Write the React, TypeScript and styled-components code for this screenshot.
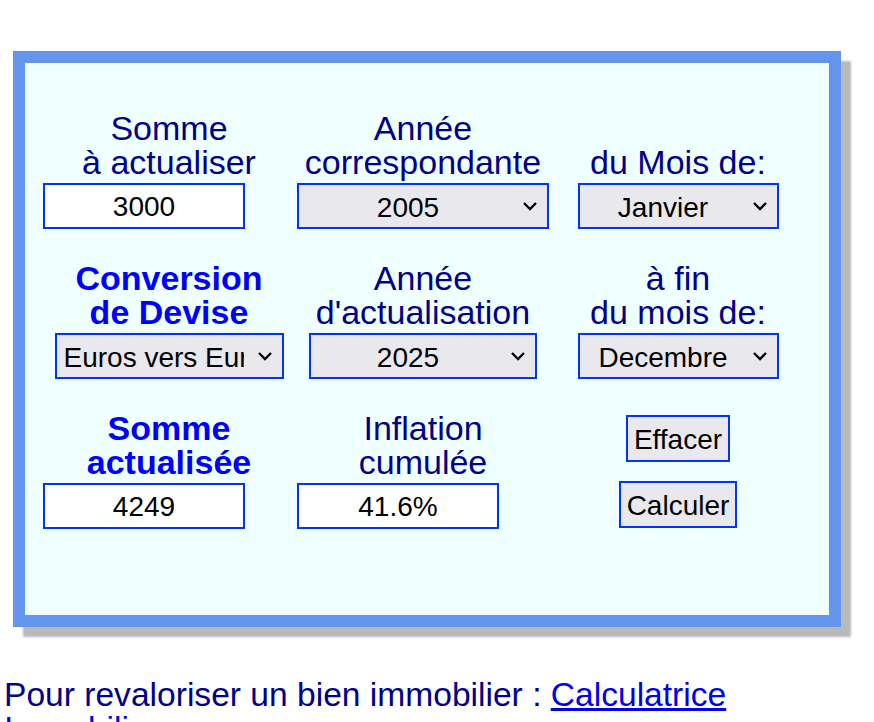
import React from 'react';
import styled, { createGlobalStyle } from 'styled-components';

const GlobalStyle = createGlobalStyle`
  body {
    margin: 0;
    background: #fff;
    font-family: "Liberation Sans", Arial, Helvetica, sans-serif;
  }
`;

const Page = styled.div`
  padding-top: 51px;
`;

const Frame = styled.form`
  margin-left: 13px;
  width: 762px;
  border: 12px solid #6495ed;
  background: #f0ffff;
  box-shadow: 10px 10px 2px #b9b9b9;
  padding: 49px 24px 86px 18px;
`;

const Grid = styled.div`
  display: grid;
  grid-template-columns: 252px 252px 254px;
  column-gap: 2px;
  row-gap: 33px;
`;

const Cell = styled.div<{ $align?: string }>`
  display: flex;
  flex-direction: column;
  align-items: ${(p) => p.$align || 'center'};
`;

const Label = styled.div<{ $bold?: boolean }>`
  align-self: stretch;
  height: 68px;
  margin-bottom: 3px;
  display: flex;
  flex-direction: column;
  justify-content: flex-end;
  text-align: center;
  font-size: 34px;
  line-height: 34px;
  white-space: nowrap;
  color: ${(p) => (p.$bold ? '#0000ff' : '#00008b')};
  font-weight: ${(p) => (p.$bold ? 'bold' : 'normal')};
  span {
    position: relative;
    top: -1px;
  }
`;

const TextBox = styled.input`
  box-sizing: border-box;
  width: 202px;
  height: 46px;
  border: 2px solid #0033ff;
  background: #fff;
  font-family: inherit;
  font-size: 28px;
  color: #000;
  text-align: center;
  padding: 2px 4px 0;
  outline: none;
`;

const SelectWrap = styled.div<{ $w: number }>`
  position: relative;
  width: ${(p) => p.$w}px;
  height: 46px;
  svg {
    position: absolute;
    right: 11px;
    top: 18px;
    pointer-events: none;
  }
`;

const Select = styled.select<{ $left?: boolean }>`
  appearance: none;
  -webkit-appearance: none;
  box-sizing: border-box;
  width: 100%;
  height: 46px;
  border: 2px solid #0033ff;
  border-radius: 0;
  background: #e9e9ed;
  font-family: inherit;
  font-size: 28px;
  color: #000;
  padding: 2px ${(p) => (p.$left ? '38px' : '34px')} 0 ${(p) => (p.$left ? '7px' : '4px')};
  text-align-last: ${(p) => (p.$left ? 'left' : 'center')};
  outline: none;
`;

const Button = styled.button<{ $top?: number }>`
  margin-top: ${(p) => p.$top || 0}px;
  box-sizing: border-box;
  height: 47px;
  padding: 2px 6px 0;
  border: 2px solid #0033ff;
  border-radius: 0;
  background: #e9e9ed;
  font-family: inherit;
  font-size: 28px;
  color: #000;
`;

const Footer = styled.p`
  margin: 51px 0 0;
  padding-left: 4px;
  width: 790px;
  font-size: 33.6px;
  line-height: 34px;
  color: #00008b;
  a {
    color: #0000ee;
  }
`;

const Chevron = () => (
  <svg width="16" height="11" viewBox="0 0 16 11">
    <polyline points="2,2 8,8 14,2" fill="none" stroke="#000" strokeWidth="2.3" />
  </svg>
);

const Dropdown = ({ w, value, options, left }: { w: number; value: string; options: string[]; left?: boolean }) => (
  <SelectWrap $w={w}>
    <Select $left={left} defaultValue={value}>
      {options.map((o) => (
        <option key={o}>{o}</option>
      ))}
    </Select>
    <Chevron />
  </SelectWrap>
);

const years = Array.from({ length: 2025 - 1901 + 1 }, (_, i) => String(2025 - i));
const months = ['Janvier', 'Fevrier', 'Mars', 'Avril', 'Mai', 'Juin', 'Juillet', 'Aout', 'Septembre', 'Octobre', 'Novembre', 'Decembre'];
const devises = ['Euros vers Euros', 'Francs vers Euros', 'Euros vers Francs'];

export default function App() {
  return (
    <Page>
      <GlobalStyle />
      <Frame onSubmit={(e) => e.preventDefault()}>
        <Grid>
          <Cell $align="flex-start">
            <Label>
              <span>Somme</span>
              <span>à actualiser</span>
            </Label>
            <TextBox defaultValue="3000" />
          </Cell>
          <Cell>
            <Label>
              <span>Année</span>
              <span>correspondante</span>
            </Label>
            <Dropdown w={252} value="2005" options={years} />
          </Cell>
          <Cell>
            <Label>
              <span>du Mois de:</span>
            </Label>
            <Dropdown w={201} value="Janvier" options={months} />
          </Cell>

          <Cell>
            <Label $bold>
              <span>Conversion</span>
              <span>de Devise</span>
            </Label>
            <Dropdown w={229} value="Euros vers Euros" options={devises} left />
          </Cell>
          <Cell>
            <Label>
              <span>Année</span>
              <span>d'actualisation</span>
            </Label>
            <Dropdown w={228} value="2025" options={years} />
          </Cell>
          <Cell>
            <Label>
              <span>à fin</span>
              <span>du mois de:</span>
            </Label>
            <Dropdown w={201} value="Decembre" options={months} />
          </Cell>

          <Cell $align="flex-start">
            <Label $bold>
              <span>Somme</span>
              <span>actualisée</span>
            </Label>
            <TextBox defaultValue="4249" readOnly />
          </Cell>
          <Cell $align="flex-start">
            <Label>
              <span>Inflation</span>
              <span>cumulée</span>
            </Label>
            <TextBox defaultValue="41.6%" readOnly />
          </Cell>
          <Cell>
            <Button type="reset" $top={3}>Effacer</Button>
            <Button type="submit" $top={19}>Calculer</Button>
          </Cell>
        </Grid>
      </Frame>
      <Footer>
        Pour revaloriser un bien immobilier : <a href="#">Calculatrice Immobilier</a>
      </Footer>
    </Page>
  );
}
